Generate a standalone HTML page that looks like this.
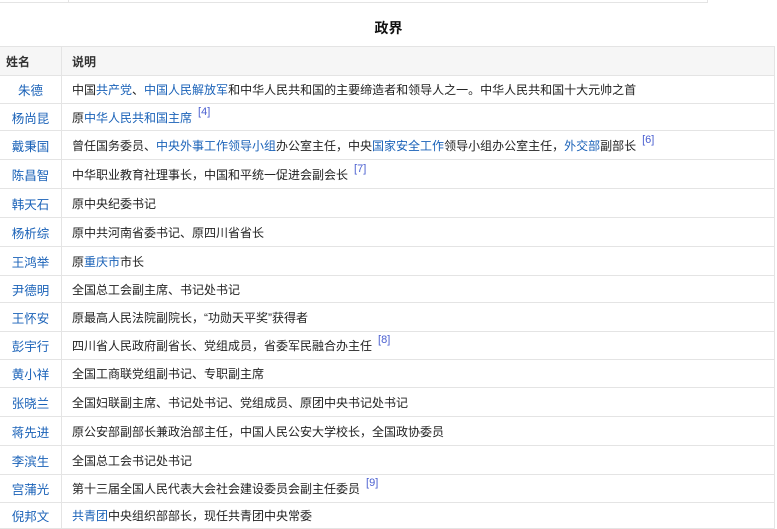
<!DOCTYPE html>
<html><head><meta charset="utf-8">
<style>
html,body{margin:0;padding:0;background:#fff;width:777px;height:529px;overflow:hidden;}
body{font-family:"Liberation Sans","Noto Sans CJK SC",sans-serif;font-size:12px;letter-spacing:0;color:#222;position:relative;}
.topbox{position:absolute;left:-1px;top:-10px;width:707px;height:11px;border:1px solid #e4e4e4;}
.topbox:after{content:"";position:absolute;left:68px;top:0;height:11px;border-left:1px solid #e4e4e4;}
.title{position:absolute;top:18px;left:0;width:777px;text-align:center;font-weight:bold;font-size:14px;color:#111;}
table{position:absolute;left:-1px;top:46px;width:776px;border-collapse:collapse;table-layout:fixed;}
td,th{border:1px solid #e4e4e4;padding:0;vertical-align:middle;white-space:nowrap;}
th{background:#f6f6f6;font-weight:bold;text-align:left;height:28px;color:#333;}
th.n{padding-left:6px;}
th.d{padding-left:10px;}
td.n{text-align:center;color:#1a62b8;font-size:12.5px;}
td.d{padding-left:10px;}
a{color:#1a62b8;text-decoration:none;}
sup{color:#4a5fd0;font-size:11px;vertical-align:7px;line-height:0;margin-left:6px;}
</style></head><body>
<div class="topbox"></div>
<div class="title">政界</div>
<table>
<colgroup><col style="width:62px"><col></colgroup>
<tr><th class="n">姓名</th><th class="d">说明</th></tr>
<tr style="height:28px"><td class="n">朱德</td><td class="d">中国<a>共产党</a>、<a>中国人民解放军</a>和中华人民共和国的主要缔造者和领导人之一。中华人民共和国十大元帅之首</td></tr>
<tr style="height:27px"><td class="n">杨尚昆</td><td class="d">原<a>中华人民共和国主席</a><sup>[4]</sup></td></tr>
<tr style="height:29px"><td class="n">戴秉国</td><td class="d">曾任国务委员、<a>中央外事工作领导小组</a>办公室主任，中央<a>国家安全工作</a>领导小组办公室主任，<a>外交部</a>副部长<sup>[6]</sup></td></tr>
<tr style="height:29px"><td class="n">陈昌智</td><td class="d">中华职业教育社理事长，中国和平统一促进会副会长<sup>[7]</sup></td></tr>
<tr style="height:29px"><td class="n">韩天石</td><td class="d">原中央纪委书记</td></tr>
<tr style="height:29px"><td class="n">杨析综</td><td class="d">原中共河南省委书记、原四川省省长</td></tr>
<tr style="height:29px"><td class="n">王鸿举</td><td class="d">原<a>重庆市</a>市长</td></tr>
<tr style="height:27px"><td class="n">尹德明</td><td class="d">全国总工会副主席、书记处书记</td></tr>
<tr style="height:29px"><td class="n">王怀安</td><td class="d">原最高人民法院副院长，“功勋天平奖”获得者</td></tr>
<tr style="height:28px"><td class="n">彭宇行</td><td class="d">四川省人民政府副省长、党组成员，省委军民融合办主任<sup>[8]</sup></td></tr>
<tr style="height:28px"><td class="n">黄小祥</td><td class="d">全国工商联党组副书记、专职副主席</td></tr>
<tr style="height:29px"><td class="n">张晓兰</td><td class="d">全国妇联副主席、书记处书记、党组成员、原团中央书记处书记</td></tr>
<tr style="height:29px"><td class="n">蒋先进</td><td class="d">原公安部副部长兼政治部主任，中国人民公安大学校长，全国政协委员</td></tr>
<tr style="height:29px"><td class="n">李滨生</td><td class="d">全国总工会书记处书记</td></tr>
<tr style="height:28px"><td class="n">宫蒲光</td><td class="d">第十三届全国人民代表大会社会建设委员会副主任委员<sup>[9]</sup></td></tr>
<tr style="height:26px"><td class="n">倪邦文</td><td class="d"><a>共青团</a>中央组织部部长，现任共青团中央常委</td></tr>
</table>
</body></html>
